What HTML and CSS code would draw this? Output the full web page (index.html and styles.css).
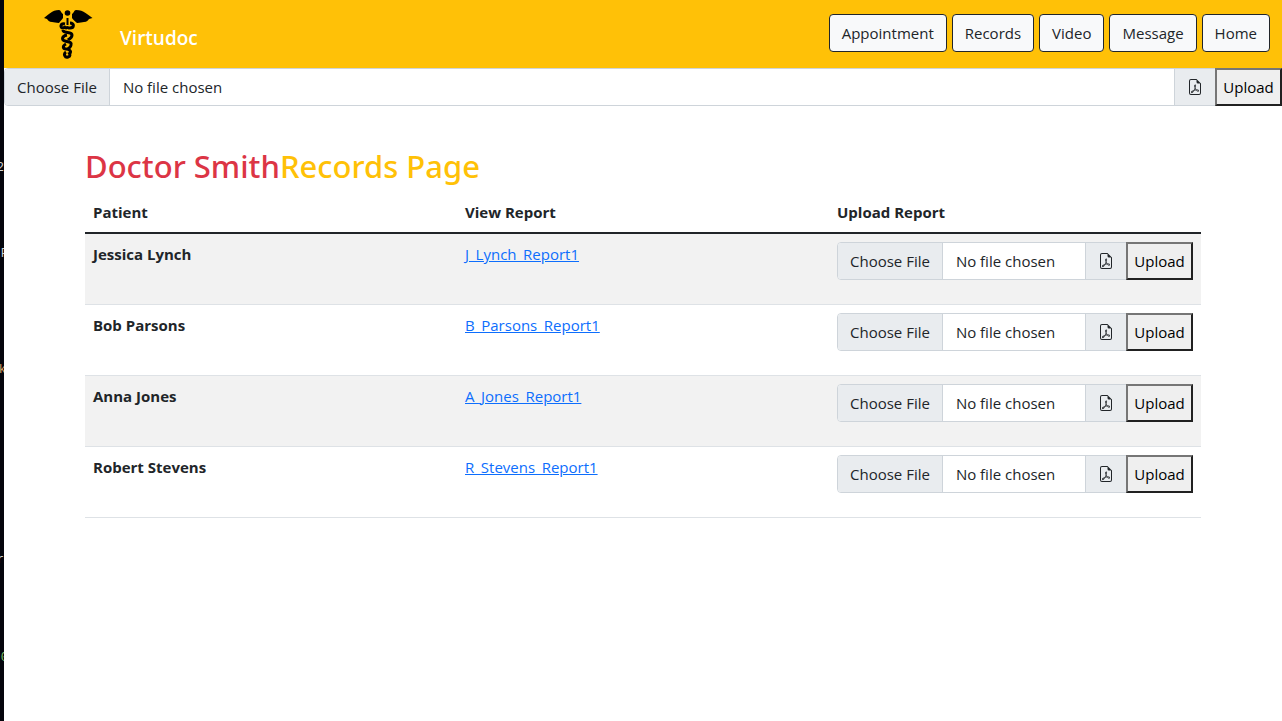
FILE: index.html
```html
<!DOCTYPE html>
<html lang="en">
<head>
<meta charset="utf-8">
<title>Virtudoc</title>
<link rel="stylesheet" href="styles.css">
</head>
<body>
<svg class="sprite" aria-hidden="true">
  <symbol id="pdf" viewBox="0 0 16 16">
    <path d="M14 14V4.500L9.500 0H4a2 2 0 0 0-2 2v12a2 2 0 0 0 2 2h8a2 2 0 0 0 2-2zM9.500 3A1.500 1.500 0 0 0 11 4.500h2V14a1 1 0 0 1-1 1H4a1 1 0 0 1-1-1V2a1 1 0 0 1 1-1h5.500v2z"/>
    <path d="M4.603 14.087a.81.81 0 0 1-.438-.42c-.195-.388-.13-.776.08-1.102.198-.307.526-.568.897-.787a7.680 7.680 0 0 1 1.482-.645 19.700 19.700 0 0 0 1.062-2.227 7.270 7.270 0 0 1-.43-1.295c-.086-.4-.119-.796-.046-1.136.075-.354.274-.672.650-.823.192-.077.400-.12.602-.077a.7.700 0 0 1 .477.365c.088.164.120.356.127.538.007.188-.012.396-.047.614-.084.510-.270 1.134-.520 1.794a11 11 0 0 0 .980 1.686 5.750 5.750 0 0 1 1.334.05c.364.066.734.195.960.465.120.144.193.320.200.518.007.192-.047.382-.138.563a1.040 1.040 0 0 1-.354.416.86.860 0 0 1-.510.138c-.331-.014-.654-.196-.933-.417a5.700 5.700 0 0 1-.911-.95 11.700 11.700 0 0 0-1.997.406 11.300 11.300 0 0 1-1.020 1.510c-.292.350-.609.656-.927.787a.8.800 0 0 1-.580.029zm1.379-1.901q-.250.115-.459.238c-.328.194-.541.383-.647.547-.094.145-.096.250-.040.361q.016.032.026.044.010-.003.035-.012c.137-.056.355-.235.635-.572a8 8 0 0 0 .450-.606zm1.640-1.330a13 13 0 0 1 1.010-.193 12 12 0 0 1-.510-.858 21 21 0 0 1-.500 1.050zm2.446.450q.226.245.435.410c.240.190.407.253.498.256a.1.100 0 0 0 .070-.015.300.300 0 0 0 .094-.125.440.440 0 0 0 .059-.200.100.100 0 0 0-.026-.063c-.052-.062-.200-.152-.518-.209a4 4 0 0 0-.612-.053zM8.078 7.800a7 7 0 0 0 .200-.828q.046-.282.038-.465a.6.600 0 0 0-.032-.198.500.500 0 0 0-.145.040c-.087.035-.158.106-.196.283-.040.192-.030.469.046.822q.036.167.090.346z"/>
  </symbol>
</svg>
<div class="desk" aria-hidden="true">
  <span class="mark mark-a">2</span>
  <span class="mark mark-b">F</span>
  <span class="mark mark-c">k</span>
  <span class="mark mark-d">r</span>
  <span class="mark mark-e">0</span>
</div>
<div class="page">
  <header class="navbar">
    <a class="brand" href="#">
      <svg class="logo" viewBox="0 0 50 50" aria-hidden="true">
        <path d="M1 9C5 6 9 1 16 1C18 1 18 4 20 5V9C19 11 17 12 16 14C13 14 11 13 9 13C6 13 5 11 4 10Z"/>
        <path d="M49.500 9C45 6 41 1 33 1C31 1 31 4 29 5V9C30 11 32 12 34 14C37 14 39 13 41 13C44 13 45 11 46 10Z"/>
        <circle cx="24.500" cy="4" r="2.800"/>
        <path d="M23.500 9h2v7h-2z"/>
        <g class="coils">
          <path d="M22 15C17 14 17 19 20 19L23 18M27 14C32 14 31 19 27 19C24 19 24 17 22 20"/>
          <path d="M20 21C20 25 29 22 29 26C29 29 26 30 25 31"/>
          <path d="M24 26C19 27 18 31 22 32C26 33 29 33 28 36C28 38 26 39 25 40"/>
          <path d="M23 35C19 37 20 40 23 40C27 40 29 43 26 45M23 43C20 45 22 49 25 48C28 47 27 44 25 45"/>
        </g>
      </svg>
      <span>Virtudoc</span>
    </a>
    <nav class="menu">
      <button class="btn" type="button">Appointment</button>
      <button class="btn" type="button">Records</button>
      <button class="btn" type="button">Video</button>
      <button class="btn" type="button">Message</button>
      <button class="btn" type="button">Home</button>
    </nav>
  </header>
  <form class="group">
    <input class="file" type="file" aria-label="Report file">
    <span class="addon"><svg class="icon" aria-hidden="true"><use href="#pdf"/></svg></span>
    <button class="upload" type="button">Upload</button>
  </form>
  <main class="container">
    <h2 class="title"><span class="doctor">Doctor Smith</span><span class="subject">Records Page</span></h2>
    <table class="records">
      <thead>
        <tr><th scope="col">Patient</th><th scope="col">View Report</th><th scope="col">Upload Report</th></tr>
      </thead>
      <tbody>
        <tr>
          <th scope="row">Jessica Lynch</th>
          <td><a href="#">J_Lynch_Report1</a></td>
          <td><form class="group"><input class="file" type="file" aria-label="Report for Jessica Lynch"><span class="addon"><svg class="icon" aria-hidden="true"><use href="#pdf"/></svg></span><button class="upload" type="button">Upload</button></form></td>
        </tr>
        <tr>
          <th scope="row">Bob Parsons</th>
          <td><a href="#">B_Parsons_Report1</a></td>
          <td><form class="group"><input class="file" type="file" aria-label="Report for Bob Parsons"><span class="addon"><svg class="icon" aria-hidden="true"><use href="#pdf"/></svg></span><button class="upload" type="button">Upload</button></form></td>
        </tr>
        <tr>
          <th scope="row">Anna Jones</th>
          <td><a href="#">A_Jones_Report1</a></td>
          <td><form class="group"><input class="file" type="file" aria-label="Report for Anna Jones"><span class="addon"><svg class="icon" aria-hidden="true"><use href="#pdf"/></svg></span><button class="upload" type="button">Upload</button></form></td>
        </tr>
        <tr>
          <th scope="row">Robert Stevens</th>
          <td><a href="#">R_Stevens_Report1</a></td>
          <td><form class="group"><input class="file" type="file" aria-label="Report for Robert Stevens"><span class="addon"><svg class="icon" aria-hidden="true"><use href="#pdf"/></svg></span><button class="upload" type="button">Upload</button></form></td>
        </tr>
      </tbody>
    </table>
  </main>
</div>
</body>
</html>
```
FILE: styles.css
```css
*,
*::before,
*::after {
  box-sizing: border-box;
}

body {
  display: flex;
  min-height: 100vh;
  margin: 0;
  background: #fff;
  color: #212529;
  font: 15px/24px "Open Sans", "Noto Sans", sans-serif;
}

.sprite {
  position: absolute;
  width: 0;
  height: 0;
}

.desk {
  position: relative;
  flex: none;
  width: 4px;
  overflow: hidden;
  background: #04050c;
}

.mark {
  position: absolute;
  right: 0;
  color: #d4d4d4;
  font: 12px/14px "Liberation Mono", monospace;
}

.mark-a { top: 161px; }
.mark-b { top: 247px; right: -4px; }
.mark-c { top: 363px; right: -2px; color: #d7a56a; }
.mark-d { top: 553px; }
.mark-e { top: 651px; right: -4px; color: #7fc46a; }

.page {
  flex: 1;
  min-width: 0;
}

.navbar {
  display: flex;
  align-items: center;
  justify-content: space-between;
  min-height: 68px;
  padding: 0 12px 0 39px;
  background: #ffc107;
}

.brand {
  display: flex;
  align-items: center;
  gap: 27px;
  color: #fff;
  font-size: 19px;
  font-weight: 600;
  line-height: 28px;
  text-decoration: none;
}

.brand span {
  padding-top: 8px;
}

.logo {
  width: 50px;
  height: 50px;
}

.coils {
  fill: none;
  stroke: #000;
  stroke-width: 3;
}

.menu {
  display: flex;
  gap: 5px;
  padding-bottom: 2px;
}

.btn {
  padding: 6px 12px;
  border: 1px solid #212529;
  border-radius: 4px;
  background: #f8f9fa;
  color: #212529;
  font: inherit;
}

.group {
  display: flex;
  align-items: stretch;
}

.file {
  flex: 1;
  min-width: 0;
  height: 38px;
  padding: 6px 12px;
  border: 1px solid #ced4da;
  border-radius: 4px 0 0 4px;
  background: #fff;
  color: #212529;
  font: inherit;
  overflow: hidden;
}

.file::file-selector-button {
  margin: -6px 13px -6px -12px;
  padding: 6px 12px;
  border: 0 solid #ced4da;
  border-right-width: 1px;
  border-radius: 0;
  background: #e9ecef;
  color: #212529;
  font: inherit;
}

.addon {
  display: flex;
  align-items: center;
  margin-left: -1px;
  padding: 0 12px;
  border: 1px solid #ced4da;
  background: #e9ecef;
}

.icon {
  width: 16px;
  height: 16px;
  fill: #212529;
}

.upload {
  min-width: 67px;
  margin-left: -1px;
  padding: 0 6px;
  border: 2px solid;
  border-color: #767676 #212121 #212121 #767676;
  background: #efefef;
  color: #000;
  font: inherit;
}

.container {
  max-width: 1140px;
  margin: 0 auto;
  padding: 41px 12px;
}

.title {
  margin: 0 0 8px;
  font-family: "Noto Sans", "Open Sans", sans-serif;
  font-size: 31px;
  font-weight: 500;
  line-height: 38px;
}

.doctor { color: #dc3545; }
.subject { color: #ffc107; }

.records {
  width: 100%;
  table-layout: fixed;
  border-collapse: collapse;
  text-align: left;
}

.records th,
.records td {
  padding: 8px;
  border-bottom: 1px solid #dee2e6;
  vertical-align: top;
}

.records th {
  font-weight: 700;
}

.records thead th {
  padding: 7px 8px 8px;
  border-bottom: 2px solid #212529;
}

.records tbody tr:nth-child(odd) {
  background: #f2f2f2;
}

.records .group {
  margin-bottom: 16px;
}

.records a {
  color: #0d6efd;
}
```
